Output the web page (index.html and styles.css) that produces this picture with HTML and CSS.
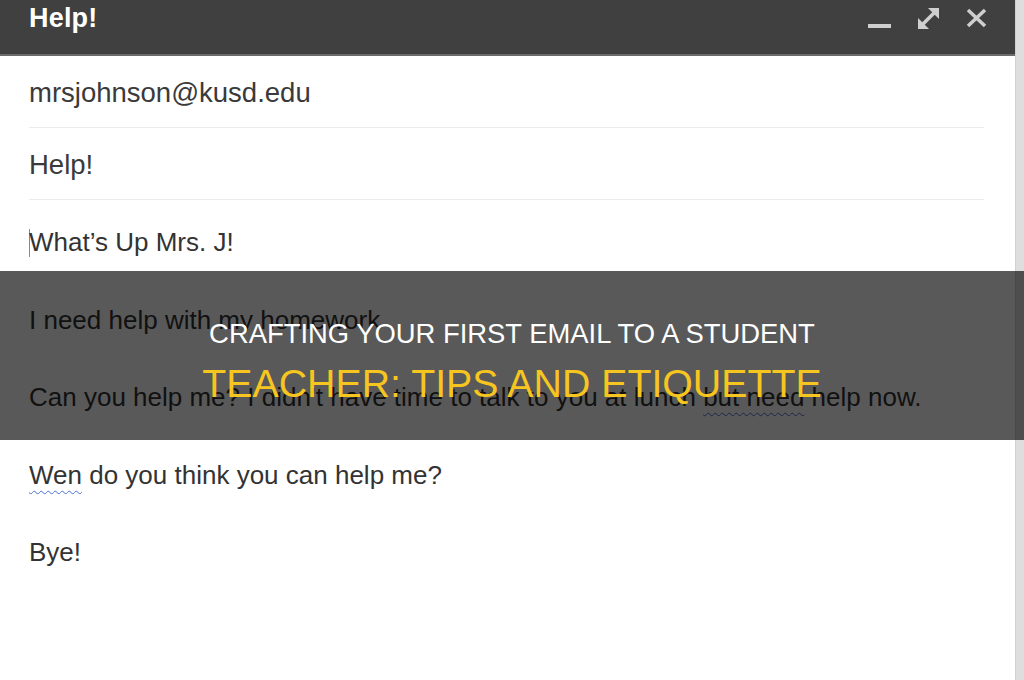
FILE: index.html
```html
<!DOCTYPE html>
<html lang="en">
<head>
    <meta charset="UTF-8">
    <meta name="viewport" content="width=device-width, initial-scale=1.0">
    <title>Crafting Your First Email To A Student Teacher</title>
    <link rel="stylesheet" href="styles.css">
</head>
<body>

    <div class="compose-window">
        <div class="compose-header">
            <span class="compose-title">Help!</span>
            <div class="header-icons">
                <svg class="icon" width="23" height="22" viewBox="0 0 23 22">
                    <rect x="0" y="17" width="23" height="4" fill="#cfcfcf"/>
                </svg>
                <svg class="icon" width="23" height="23" viewBox="0 0 23 23">
                    <path d="M3 20 L20 3" stroke="#cfcfcf" stroke-width="3.5"/>
                    <path d="M11 1 H22 V12 Z" fill="#cfcfcf"/>
                    <path d="M1 11 V22 H12 Z" fill="#cfcfcf"/>
                </svg>
                <svg class="icon" width="21" height="21" viewBox="0 0 21 21">
                    <path d="M2 3 L19 19 M19 3 L2 19" stroke="#cfcfcf" stroke-width="3.5"/>
                </svg>
            </div>
        </div>

        <div class="field">mrsjohnson@kusd.edu</div>
        <div class="field">Help!</div>

        <div class="message-body">
            <p><span class="caret"></span>What’s Up Mrs. J!</p>
            <p>I need help with my homework</p>
            <p>Can you help me? I didn't have time to talk to you at lunch <span class="misspelled">but need</span> help now.</p>
            <p><span class="misspelled">Wen</span> do you think you can help me?</p>
            <p>Bye!</p>
        </div>
    </div>

    <div class="banner">
        <h1>
            <span class="banner-top">CRAFTING YOUR FIRST EMAIL TO A STUDENT</span>
            <span class="banner-bottom">TEACHER: TIPS AND ETIQUETTE</span>
        </h1>
    </div>

</body>
</html>
```

FILE: styles.css
```css
body {
    margin: 0;
    padding: 0;
    font-family: "Liberation Sans", Arial, sans-serif;
    background-color: #dedede;
    height: 680px;
    overflow: hidden;
}
.compose-window {
    background-color: white;
    margin-right: 8px;
    height: 680px;
    border-right: 1px solid #d0d0d0;
}
.compose-header {
    height: 54px;
    background-color: #404040;
    border-bottom: 2px solid #6a6a6a;
    display: flex;
    justify-content: space-between;
    align-items: flex-start;
    padding: 0 28px 0 29px;
}
.compose-title {
    color: white;
    font-weight: bold;
    font-size: 27px;
    line-height: 36px;
    letter-spacing: 0.2px;
}
.header-icons {
    display: flex;
    gap: 26px;
    padding-top: 7px;
}
.field {
    margin: 0 31px 0 29px;
    padding-top: 22px;
    height: 49px;
    font-size: 27.5px;
    line-height: 30px;
    color: #3a3a3a;
    border-bottom: 1px solid #ececec;
}
.message-body {
    padding: 27px 29px 0;
    font-size: 26px;
    line-height: 30px;
    color: #333;
}
.message-body p {
    margin: 0 0 47.5px;
}
.caret {
    display: inline-block;
    width: 1px;
    height: 28px;
    background-color: #888;
    vertical-align: -6px;
    margin-right: -1px;
}
.misspelled {
    text-decoration: underline wavy #4a6fd8;
    text-decoration-thickness: 1px;
    text-underline-offset: 6px;
}
.banner {
    position: absolute;
    left: 0;
    top: 271px;
    width: 1024px;
    height: 169px;
    background-color: rgba(0, 0, 0, 0.65);
    display: flex;
    justify-content: center;
    align-items: center;
}
.banner h1 {
    margin: 0;
    padding-top: 15px;
    text-align: center;
    font-family: "Liberation Sans", Arial, sans-serif;
    font-weight: normal;
}
.banner-top {
    display: block;
    color: white;
    font-size: 27.4px;
    line-height: 40px;
}
.banner-bottom {
    display: block;
    color: #f7c520;
    font-size: 39.3px;
    line-height: 58px;
}
```
